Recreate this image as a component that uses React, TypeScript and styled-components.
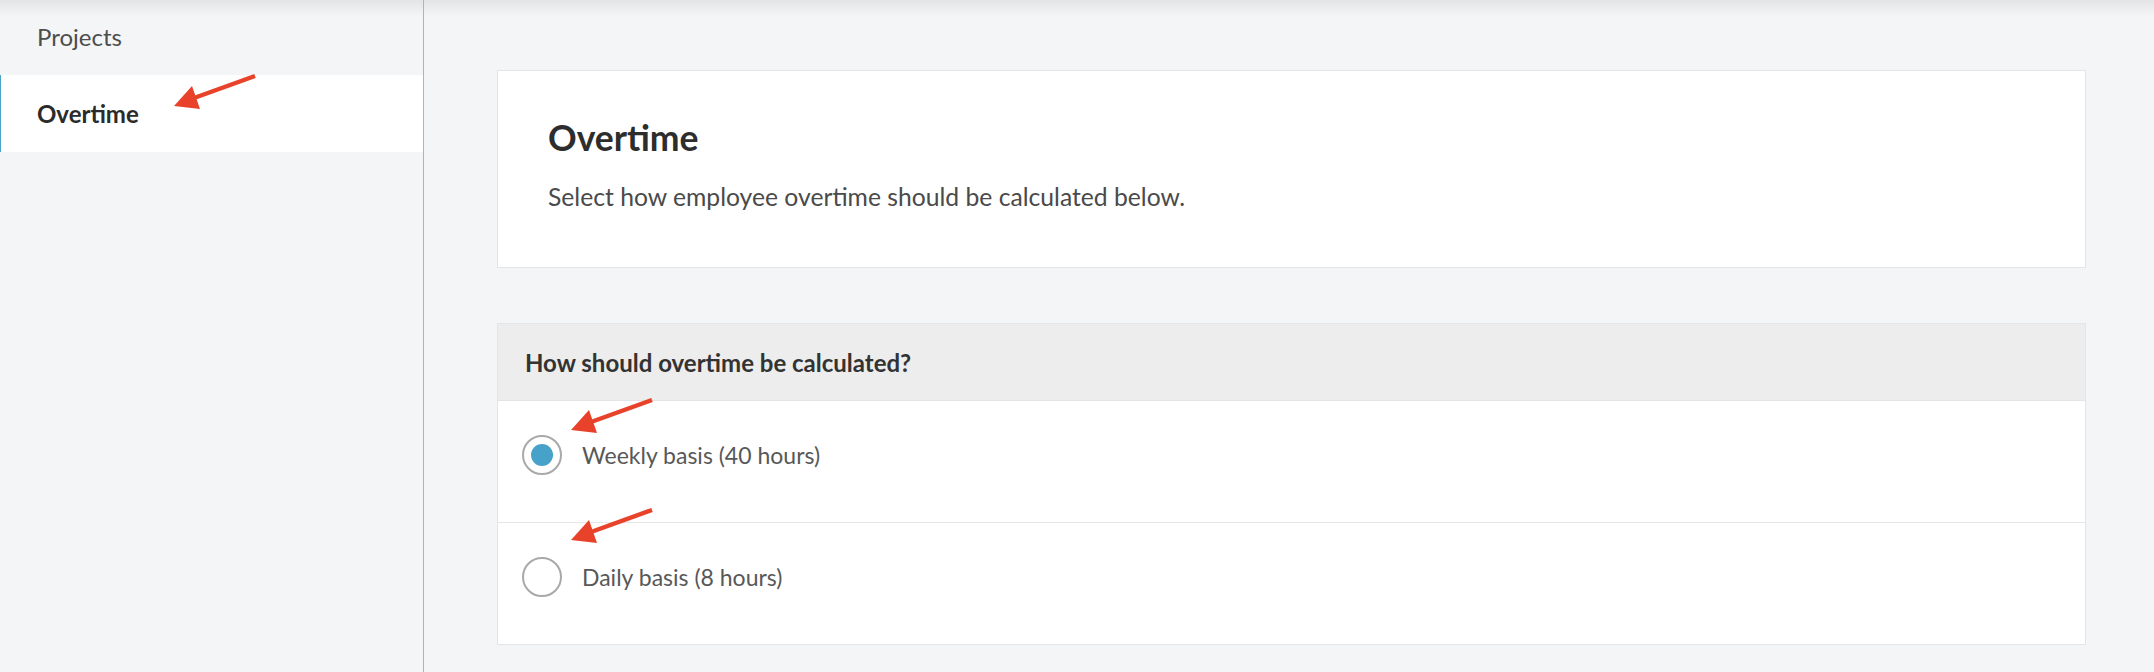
import React from 'react'
import styled, { createGlobalStyle } from 'styled-components'

const GlobalStyle = createGlobalStyle`
  html, body {
    margin: 0;
    padding: 0;
    background: #f4f5f7;
  }
  body {
    font-family: Lato, 'Open Sans', 'Liberation Sans', sans-serif;
  }
  * {
    box-sizing: border-box;
  }
`

const Page = styled.div`
  display: flex;
  width: 2154px;
  height: 672px;
  overflow: hidden;
  background: linear-gradient(#e3e4e6 0, #f4f5f7 16px);
`

const Sidebar = styled.nav`
  flex: 0 0 424px;
  border-right: 1px solid #b3b3b3;
  display: flex;
  flex-direction: column;
  margin-top: -2px;
`

const NavItem = styled.div<{ $active?: boolean }>`
  position: relative;
  height: 77px;
  display: flex;
  align-items: center;
  font-size: 24px;
  font-weight: ${({ $active }) => ($active ? 700 : 400)};
  color: ${({ $active }) => ($active ? '#2b2b2b' : '#4d4d4d')};
  background: ${({ $active }) => ($active ? '#ffffff' : 'transparent')};
  border-left: 1px solid ${({ $active }) => ($active ? '#4aa3c8' : 'transparent')};
  padding-left: 36px;
`

const Main = styled.main`
  flex: 1;
  padding: 70px 68px 0 73px;
  display: flex;
  flex-direction: column;
  gap: 55px;
`

const Card = styled.section`
  background: #ffffff;
  border: 1px solid #e4e5e7;
`

const IntroBody = styled.div`
  padding: 46px 50px 56px;
`

const Heading = styled.h1`
  margin: 0;
  font-size: 35.5px;
  line-height: 1.2;
  font-weight: 700;
  color: #2d2d2d;
`

const Subtitle = styled.p`
  margin: 22px 0 0;
  font-size: 24.7px;
  line-height: 1.2;
  color: #4a4a4a;
`

const CardHeader = styled.div`
  height: 77px;
  display: flex;
  align-items: center;
  padding: 0 27px;
  background: #ededed;
  border-bottom: 1px solid #e4e4e4;
  font-size: 24px;
  font-weight: 700;
  color: #333333;
`

const OptionRow = styled.label`
  position: relative;
  display: flex;
  align-items: center;
  gap: 20px;
  padding: 34px 24px 47px;
  font-size: 23px;
  color: #585858;
  & + & {
    border-top: 1px solid #e6e6e6;
  }
`

const RadioOuter = styled.span`
  flex: 0 0 40px;
  width: 40px;
  height: 40px;
  border-radius: 50%;
  border: 2px solid #a9a9a9;
  background: #fff;
  display: flex;
  align-items: center;
  justify-content: center;
`

const RadioDot = styled.span`
  width: 22px;
  height: 22px;
  border-radius: 50%;
  background: #46a2c9;
`

const ArrowMark = styled.svg<{ $left: number; $top: number }>`
  position: absolute;
  left: ${({ $left }) => $left}px;
  top: ${({ $top }) => $top}px;
  pointer-events: none;
`

const Arrow = ({ left, top }: { left: number; top: number }) => (
  <ArrowMark $left={left} $top={top} width="88" height="42" viewBox="0 0 88 42">
    <line x1="83" y1="4" x2="22" y2="26" stroke="#e8432a" strokeWidth="4.5" />
    <polygon points="2,34 20,14 28,37" fill="#e8432a" />
  </ArrowMark>
)

const options = [
  { label: 'Weekly basis (40 hours)', checked: true, arrowTop: -5 },
  { label: 'Daily basis (8 hours)', checked: false, arrowTop: -17 },
]

export default function App() {
  return (
    <>
      <GlobalStyle />
      <Page>
        <Sidebar>
          <NavItem>Projects</NavItem>
          <NavItem $active>
            Overtime
            <Arrow left={171} top={-3} />
          </NavItem>
        </Sidebar>
        <Main>
          <Card>
            <IntroBody>
              <Heading>Overtime</Heading>
              <Subtitle>Select how employee overtime should be calculated below.</Subtitle>
            </IntroBody>
          </Card>
          <Card>
            <CardHeader>How should overtime be calculated?</CardHeader>
            {options.map((o) => (
              <OptionRow key={o.label}>
                <RadioOuter>{o.checked && <RadioDot />}</RadioOuter>
                {o.label}
                <Arrow left={71} top={o.arrowTop} />
              </OptionRow>
            ))}
          </Card>
        </Main>
      </Page>
    </>
  )
}
